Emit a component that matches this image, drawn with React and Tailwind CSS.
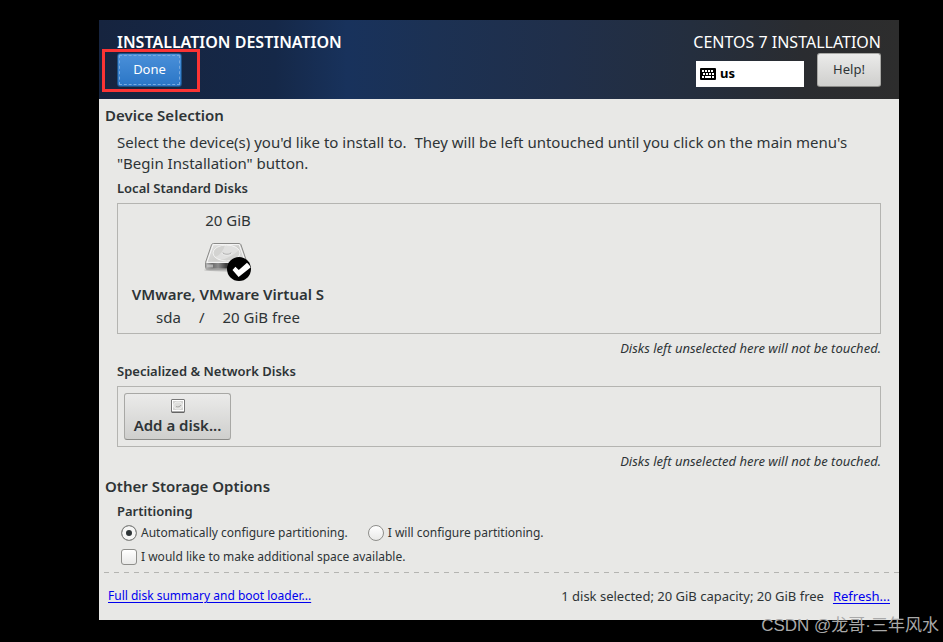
/**
 * Installation destination screen — pick target disks and partitioning mode.
 */

import { useState } from 'react';

const PARTITIONING_OPTIONS = [
  { value: 'auto',   label: 'Automatically configure partitioning.' },
  { value: 'manual', label: 'I will configure partitioning.' },
];

function KeyboardIcon() {
  return (
    <svg width="16" height="12" viewBox="0 0 16 12" aria-hidden="true">
      <rect width="16" height="12" rx="1" fill="#000" />
      <path d="M2 3h12" stroke="#fff" strokeWidth="2" strokeDasharray="2 1" />
      <path d="M3 6h11" stroke="#fff" strokeWidth="2" strokeDasharray="2 1" />
      <path d="M2 9h2M5 9h6M12 9h2" stroke="#fff" strokeWidth="2" />
    </svg>
  );
}

function DriveIcon() {
  return (
    <svg width="48" height="44" viewBox="0 0 48 44" aria-hidden="true">
      <defs>
        <linearGradient id="drive-top" x1="0" y1="0" x2="1" y2="1">
          <stop offset="0" stopColor="#e6e6e5" />
          <stop offset="0.45" stopColor="#cfcfcd" />
          <stop offset="1" stopColor="#e2e2e1" />
        </linearGradient>
        <linearGradient id="drive-front" x1="0" y1="0" x2="1" y2="0">
          <stop offset="0" stopColor="#b0b0b0" />
          <stop offset="0.15" stopColor="#6a6a6a" />
          <stop offset="0.3" stopColor="#8c8c8c" />
          <stop offset="0.5" stopColor="#3c3c3c" />
          <stop offset="1" stopColor="#777" />
        </linearGradient>
      </defs>
      <ellipse cx="22" cy="30" rx="22" ry="1.5" fill="#000" opacity="0.2" />
      <path
        d="M9.500 3.500h25.500c1 0 1.600.4 2 1.400l6 17.600v5c0 .9-.6 1.500-1.500 1.500H3c-.9 0-1.500-.6-1.500-1.500v-5L7.500 4.900c.4-1 1-1.400 2-1.400z"
        fill="url(#drive-top)"
        stroke="#8a8a88"
      />
      <path d="M2 23h40.500v4.500c0 .6-.4 1-1 1H3c-.6 0-1-.4-1-1z" fill="url(#drive-front)" />
      <path d="M9.200 4.600h26L41.600 22.400H3z" fill="none" stroke="#f8f8f8" />
      <ellipse cx="22.500" cy="13" rx="13.500" ry="8" fill="#d3d3d1" stroke="#f0f0ef" />
      <path d="M10 17c4 0 9-5 11-12 6-.5 12 1 14 5-5 5-14 10-20 10z" fill="#fff" opacity="0.3" />
      <path d="M19 12.600c0 2.200 8 2.200 8 0" fill="none" stroke="#999" strokeWidth="0.8" />
      <path d="M18 13c0 3 10 3 10 0" fill="none" stroke="#f4f4f4" strokeWidth="0.6" />
      <path d="M3 24.500h6v3H3z" fill="#cfcfcf" opacity="0.7" />
      {/* Selected badge */}
      <circle cx="35" cy="29" r="12" fill="#000" />
      <path d="M28.500 30l2.900-3.200 3.400 3.200 8.200-7.200c1.800 1.600 3 3 3.600 4.700L34.600 37z" fill="#fff" />
    </svg>
  );
}

function SmallDriveIcon() {
  return (
    <svg width="14" height="14" viewBox="0 0 14 14" aria-hidden="true">
      <rect x="0.500" y="0.500" width="13" height="13" rx="0.500" fill="#fff" stroke="#777" />
      <rect x="2" y="2" width="10" height="9" fill="#d2d2d0" />
      <ellipse cx="7" cy="6.500" rx="4.500" ry="3.500" fill="#dededc" stroke="#efefee" />
      <path d="M5 7.500c2 .8 4 .3 5-1.500" stroke="#a5a5a3" fill="none" />
      <path d="M1 13h12" stroke="#555" />
    </svg>
  );
}

function GrayButton({ className, children }) {
  return (
    <button
      type="button"
      className={`rounded-[3px] border border-[#a8a8a5] border-b-[#8b8b88] bg-linear-to-b from-[#ebebea] to-[#cfcfcd] text-[#2e3436] ${className}`}
    >
      {children}
    </button>
  );
}

function SectionTitle({ children }) {
  return <h2 className="text-[15px] leading-6 font-semibold">{children}</h2>;
}

function GroupTitle({ children }) {
  return <h3 className="text-[13px] leading-5 font-semibold">{children}</h3>;
}

function UntouchedNote() {
  return (
    <p className="mt-1 text-right text-[13px] leading-5 italic">
      Disks left unselected here will not be touched.
    </p>
  );
}

function Header() {
  return (
    <header className="flex justify-between bg-[linear-gradient(90deg,#16243f_0%,#152848_22%,#18325c_31%,#1c3153_42%,#202f4a_58%,#242e3e_74%,#2a2c30_88%,#2d2d2d_100%)] pr-[18px] pb-3 pl-[18px] text-white">
      <div className="pt-3">
        <h1 className="text-base leading-5 font-semibold">INSTALLATION DESTINATION</h1>
        <div className="relative mt-px w-fit">
          <button
            type="button"
            className="block h-[34px] w-[65px] rounded-[3px] border border-[#1c5187] bg-linear-to-b from-[#4a90d9] to-[#2a76c6] p-px text-[13px]"
          >
            <span className="flex h-full items-center justify-center border border-dashed border-[#7aaade]">
              Done
            </span>
          </button>
          {/* Callout frame around the button */}
          <span className="pointer-events-none absolute -top-1 -right-[18px] -bottom-[5px] -left-[15px] border-3 border-[#fb3434]" />
        </div>
      </div>
      <div className="pt-3">
        <p className="text-right text-base leading-5">CENTOS 7 INSTALLATION</p>
        <div className="mt-px flex items-end justify-end gap-[13px]">
          <button
            type="button"
            className="flex h-[26px] w-[108px] items-center gap-1 bg-white px-1 text-[13px] font-bold text-black"
          >
            <KeyboardIcon />
            us
          </button>
          <GrayButton className="h-[34px] w-16 text-[13px]">Help!</GrayButton>
        </div>
      </div>
    </header>
  );
}

export default function App() {
  const [partitioning, setPartitioning] = useState('auto');
  const [extraSpace, setExtraSpace] = useState(false);

  return (
    <div className="relative min-h-screen bg-black pt-5 pr-11 pb-[22px] pl-[99px] font-['Noto_Sans','Noto_Sans_CJK_SC',sans-serif] text-[#2e3436]">
      <div className="bg-[#e8e8e6]">
        <Header />

        <main className="pt-1 pb-[5px]">
          <section className="px-[18px]">
            <div className="-ml-3">
              <SectionTitle>Device Selection</SectionTitle>
            </div>
            <p className="mt-[5px] text-[15px] leading-[21px] whitespace-pre-wrap">
              {'Select the device(s) you\'d like to install to.  They will be left untouched until you click on the main menu\'s "Begin Installation" button.'}
            </p>

            <div className="mt-1">
              <GroupTitle>Local Standard Disks</GroupTitle>
            </div>
            <div className="mt-[5px] border border-[#b4b4b1] px-3 py-1.5">
              <div className="flex w-[196px] flex-col items-center text-[15px] leading-5">
                <span>20 GiB</span>
                <span className="mt-2.5">
                  <DriveIcon />
                </span>
                <span className="font-semibold">VMware, VMware Virtual S</span>
                <span className="mt-[3px] flex">
                  <span>sda</span>
                  <span className="mx-[18px]">/</span>
                  <span>20 GiB free</span>
                </span>
              </div>
            </div>
            <UntouchedNote />

            <div className="mt-[3px]">
              <GroupTitle>Specialized &amp; Network Disks</GroupTitle>
            </div>
            <div className="mt-[5px] border border-[#b4b4b1] p-1.5">
              <GrayButton className="flex h-[47px] w-[107px] flex-col items-center justify-center text-[15px] leading-5 font-semibold">
                <SmallDriveIcon />
                <span className="mt-0.5">Add a disk...</span>
              </GrayButton>
            </div>
            <UntouchedNote />
          </section>

          <section className="mt-[3px] px-[18px]">
            <div className="-ml-3">
              <SectionTitle>Other Storage Options</SectionTitle>
            </div>
            <div className="mt-[3px]">
              <GroupTitle>Partitioning</GroupTitle>
            </div>
            <div className="mt-0.5 flex gap-5 pl-1 text-xs leading-5">
              {PARTITIONING_OPTIONS.map((opt) => (
                <label key={opt.value} className="flex items-center gap-1">
                  <input
                    type="radio"
                    name="partitioning"
                    value={opt.value}
                    checked={partitioning === opt.value}
                    onChange={() => setPartitioning(opt.value)}
                    className="size-4 appearance-none rounded-full border border-[#8e8e8b] bg-linear-to-b from-white to-[#e9e9e8] checked:bg-none checked:bg-[#2e3436] checked:shadow-[inset_0_0_0_4px_#f6f6f5]"
                  />
                  {opt.label}
                </label>
              ))}
            </div>
            <label className="mt-1 flex w-fit items-center gap-1 pl-1 text-xs leading-5">
              <input
                type="checkbox"
                checked={extraSpace}
                onChange={(e) => setExtraSpace(e.target.checked)}
                className="size-4 appearance-none rounded-[3px] border border-[#8e8e8b] bg-linear-to-b from-white to-[#e9e9e8] checked:from-[#2e3436]"
              />
              I would like to make additional space available.
            </label>
          </section>
        </main>

        {/* Dashed rule, 5px on and 5px off */}
        <div className="ml-[5px] h-px bg-[repeating-linear-gradient(90deg,#b4b4b1_0_5px,transparent_5px_10px)]" />

        <footer className="flex items-center justify-between px-[9px] pt-[13px] pb-[14px] text-[13px] leading-5">
          <a href="#summary" className="text-xs leading-5 text-[#0000ee] underline underline-offset-2">
            Full disk summary and boot loader...
          </a>
          <p>
            1 disk selected; 20 GiB capacity; 20 GiB free
            <a href="#refresh" className="ml-[9px] text-[#0000ee] underline underline-offset-2">
              Refresh...
            </a>
          </p>
        </footer>
      </div>

      {/* Watermark */}
      <span className="absolute right-1 bottom-0 font-['Liberation_Sans','Noto_Sans_CJK_SC',sans-serif] text-[17px] leading-8 text-[#a9a9a9]">
        CSDN @龙哥·三年风水
      </span>
    </div>
  );
}
